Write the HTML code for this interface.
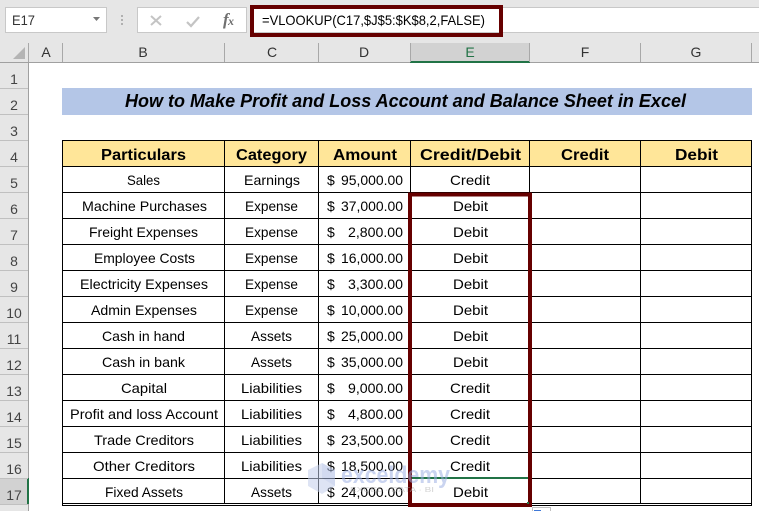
<!DOCTYPE html>
<html>
<head>
<meta charset="utf-8">
<title>Excel</title>
<style>
html,body{margin:0;padding:0;background:#fff;width:759px;height:511px;overflow:hidden}
svg{display:block}
text{font-family:"Liberation Sans",sans-serif;font-size:14px;fill:#000}
.c{text-anchor:middle}
.r{text-anchor:end}
.h{font-size:16px;font-weight:bold;text-anchor:middle}
.n{font-size:14px;fill:#444;text-anchor:middle}
.k{font-size:14px;fill:#333;text-anchor:middle}
</style>
</head>
<body>
<svg width="759" height="511" viewBox="0 0 759 511" xmlns="http://www.w3.org/2000/svg">
<!-- chrome -->
<rect x="0" y="0" width="759" height="62" fill="#e6e6e6"/>
<rect x="0" y="62" width="29" height="449" fill="#e6e6e6"/>
<rect x="5.5" y="7.500" width="101" height="25" fill="#fff" stroke="#c8c8c8"/>
<text x="12" y="25" textLength="23" lengthAdjust="spacingAndGlyphs" style="fill:#333">E17</text>
<polygon points="93,17 100,17 96.500,21" fill="#777"/>
<rect x="121" y="15" width="2" height="2" fill="#b0b0b0"/><rect x="121" y="19" width="2" height="2" fill="#b0b0b0"/><rect x="121" y="23" width="2" height="2" fill="#b0b0b0"/>
<rect x="137.500" y="7.500" width="109" height="25" fill="#fff" stroke="#c8c8c8"/>
<path d="M151 16 L161 25 M161 16 L151 25" stroke="#c4c4c4" stroke-width="2" fill="none"/>
<path d="M187 22 L191 26 L199 17" stroke="#c4c4c4" stroke-width="2.200" fill="none"/>
<text x="223" y="25" style="font-family:'Liberation Serif',serif;font-style:italic;font-size:17px;fill:#707070;font-weight:bold">f</text>
<text x="228" y="25" style="font-family:'Liberation Serif',serif;font-style:italic;font-size:12px;fill:#707070;font-weight:bold">x</text>
<rect x="253" y="7" width="506" height="26" fill="#fff"/>
<rect x="253" y="7" width="506" height="1" fill="#c8c8c8"/>
<rect x="253" y="32" width="506" height="1" fill="#c8c8c8"/>
<text x="262" y="25" textLength="223" lengthAdjust="spacingAndGlyphs">=VLOOKUP(C17,$J$5:$K$8,2,FALSE)</text>
<rect x="252" y="7" width="249" height="28" fill="none" stroke="#660000" stroke-width="4"/>

<!-- column headers -->
<polygon points="25,47 25,59 13,59" fill="#b4b4b4"/>
<rect x="410" y="43" width="120" height="19" fill="#d2d2d2"/>
<rect x="0" y="62" width="759" height="1" fill="#a0a0a0"/>
<rect x="410" y="61" width="120" height="2" fill="#217346"/>
<g fill="#a8a8a8">
<rect x="28" y="43" width="1" height="19"/><rect x="62" y="43" width="1" height="19"/><rect x="224" y="43" width="1" height="19"/><rect x="318" y="43" width="1" height="19"/><rect x="410" y="43" width="1" height="19"/><rect x="529" y="43" width="1" height="19"/><rect x="640" y="43" width="1" height="19"/><rect x="751" y="43" width="1" height="19"/>
</g>
<text class="k" x="46" y="57">A</text>
<text class="k" x="143" y="57">B</text>
<text class="k" x="272" y="57">C</text>
<text class="k" x="364" y="57">D</text>
<text class="k" x="470" y="57" style="fill:#217346">E</text>
<text class="k" x="585" y="57">F</text>
<text class="k" x="696" y="57">G</text>

<!-- row headers -->
<rect x="0" y="478" width="29" height="26" fill="#d2d2d2"/>
<rect x="28" y="62" width="1" height="449" fill="#a0a0a0"/>
<rect x="27" y="478" width="2" height="26" fill="#217346"/>
<g fill="#c0c0c0">
<rect x="0" y="88" width="28" height="1"/><rect x="0" y="114" width="28" height="1"/><rect x="0" y="140" width="28" height="1"/><rect x="0" y="166" width="28" height="1"/><rect x="0" y="192" width="28" height="1"/><rect x="0" y="218" width="28" height="1"/><rect x="0" y="244" width="28" height="1"/><rect x="0" y="270" width="28" height="1"/><rect x="0" y="296" width="28" height="1"/><rect x="0" y="322" width="28" height="1"/><rect x="0" y="348" width="28" height="1"/><rect x="0" y="374" width="28" height="1"/><rect x="0" y="400" width="28" height="1"/><rect x="0" y="426" width="28" height="1"/><rect x="0" y="452" width="28" height="1"/><rect x="0" y="478" width="28" height="1"/><rect x="0" y="504" width="28" height="1"/>
</g>
<text class="n" x="14" y="84">1</text>
<text class="n" x="14" y="110">2</text>
<text class="n" x="14" y="136">3</text>
<text class="n" x="14" y="162">4</text>
<text class="n" x="14" y="188">5</text>
<text class="n" x="14" y="214">6</text>
<text class="n" x="14" y="240">7</text>
<text class="n" x="14" y="266">8</text>
<text class="n" x="14" y="292">9</text>
<text class="n" x="14" y="318">10</text>
<text class="n" x="14" y="344">11</text>
<text class="n" x="14" y="370">12</text>
<text class="n" x="14" y="396">13</text>
<text class="n" x="14" y="422">14</text>
<text class="n" x="14" y="448">15</text>
<text class="n" x="14" y="474">16</text>
<text class="n" x="14" y="500">17</text>

<!-- title -->
<rect x="62" y="88" width="690" height="27" fill="#b4c6e7"/>
<text x="125" y="107" textLength="561" lengthAdjust="spacingAndGlyphs" style="font-size:18px;font-weight:bold;font-style:italic">How to Make Profit and Loss Account and Balance Sheet in Excel</text>

<!-- table -->
<rect x="62" y="140" width="690" height="26" fill="#ffe699"/>
<g stroke="#000" stroke-width="1" fill="none">
<path d="M62 140.500H752M62 166.500H752M62 192.500H752M62 218.500H752M62 244.500H752M62 270.500H752M62 296.500H752M62 322.500H752M62 348.500H752M62 374.500H752M62 400.500H752M62 426.500H752M62 452.500H752M62 478.500H752M62 503.500H752M62 505.500H752"/>
<path d="M62.500 140V506M224.500 140V504M318.500 140V504M410.500 140V504M529.500 140V504M640.500 140V504M751.500 140V506"/>
</g>
<text class="h" x="143.500" y="160" textLength="85" lengthAdjust="spacingAndGlyphs">Particulars</text>
<text class="h" x="271.500" y="160" textLength="71" lengthAdjust="spacingAndGlyphs">Category</text>
<text class="h" x="365" y="160" textLength="64" lengthAdjust="spacingAndGlyphs">Amount</text>
<text class="h" x="470.500" y="160" textLength="101" lengthAdjust="spacingAndGlyphs">Credit/Debit</text>
<text class="h" x="585" y="160" textLength="48" lengthAdjust="spacingAndGlyphs">Credit</text>
<text class="h" x="696.500" y="160" textLength="43" lengthAdjust="spacingAndGlyphs">Debit</text>

<text class="c" x="143.500" y="185" textLength="33" lengthAdjust="spacingAndGlyphs">Sales</text>
<text class="c" x="144.500" y="211" textLength="125" lengthAdjust="spacingAndGlyphs">Machine Purchases</text>
<text class="c" x="143.500" y="237" textLength="109" lengthAdjust="spacingAndGlyphs">Freight Expenses</text>
<text class="c" x="144.500" y="263" textLength="101" lengthAdjust="spacingAndGlyphs">Employee Costs</text>
<text class="c" x="144" y="289" textLength="128" lengthAdjust="spacingAndGlyphs">Electricity Expenses</text>
<text class="c" x="144" y="315" textLength="106" lengthAdjust="spacingAndGlyphs">Admin Expenses</text>
<text class="c" x="143.500" y="341" textLength="83" lengthAdjust="spacingAndGlyphs">Cash in hand</text>
<text class="c" x="143.500" y="367" textLength="83" lengthAdjust="spacingAndGlyphs">Cash in bank</text>
<text class="c" x="144" y="393" textLength="46" lengthAdjust="spacingAndGlyphs">Capital</text>
<text class="c" x="144" y="419" textLength="148" lengthAdjust="spacingAndGlyphs">Profit and loss Account</text>
<text class="c" x="144" y="445" textLength="100" lengthAdjust="spacingAndGlyphs">Trade Creditors</text>
<text class="c" x="144" y="471" textLength="102" lengthAdjust="spacingAndGlyphs">Other Creditors</text>
<text class="c" x="144" y="497" textLength="78" lengthAdjust="spacingAndGlyphs">Fixed Assets</text>

<text class="c" x="272" y="185" textLength="56" lengthAdjust="spacingAndGlyphs">Earnings</text>
<text class="c" x="271.500" y="211" textLength="53" lengthAdjust="spacingAndGlyphs">Expense</text>
<text class="c" x="271.500" y="237" textLength="53" lengthAdjust="spacingAndGlyphs">Expense</text>
<text class="c" x="271.500" y="263" textLength="53" lengthAdjust="spacingAndGlyphs">Expense</text>
<text class="c" x="271.500" y="289" textLength="53" lengthAdjust="spacingAndGlyphs">Expense</text>
<text class="c" x="271.500" y="315" textLength="53" lengthAdjust="spacingAndGlyphs">Expense</text>
<text class="c" x="271.500" y="341" textLength="41" lengthAdjust="spacingAndGlyphs">Assets</text>
<text class="c" x="271.500" y="367" textLength="41" lengthAdjust="spacingAndGlyphs">Assets</text>
<text class="c" x="271.500" y="393" textLength="61" lengthAdjust="spacingAndGlyphs">Liabilities</text>
<text class="c" x="271.500" y="419" textLength="61" lengthAdjust="spacingAndGlyphs">Liabilities</text>
<text class="c" x="271.500" y="445" textLength="61" lengthAdjust="spacingAndGlyphs">Liabilities</text>
<text class="c" x="271.500" y="471" textLength="61" lengthAdjust="spacingAndGlyphs">Liabilities</text>
<text class="c" x="271.500" y="497" textLength="41" lengthAdjust="spacingAndGlyphs">Assets</text>

<g>
<text x="327" y="185">$</text><text x="341" y="185" textLength="62" lengthAdjust="spacingAndGlyphs">95,000.00</text>
<text x="327" y="211">$</text><text x="341" y="211" textLength="62" lengthAdjust="spacingAndGlyphs">37,000.00</text>
<text x="327" y="237">$</text><text x="348" y="237" textLength="55" lengthAdjust="spacingAndGlyphs">2,800.00</text>
<text x="327" y="263">$</text><text x="341" y="263" textLength="62" lengthAdjust="spacingAndGlyphs">16,000.00</text>
<text x="327" y="289">$</text><text x="348" y="289" textLength="55" lengthAdjust="spacingAndGlyphs">3,300.00</text>
<text x="327" y="315">$</text><text x="341" y="315" textLength="62" lengthAdjust="spacingAndGlyphs">10,000.00</text>
<text x="327" y="341">$</text><text x="341" y="341" textLength="62" lengthAdjust="spacingAndGlyphs">25,000.00</text>
<text x="327" y="367">$</text><text x="341" y="367" textLength="62" lengthAdjust="spacingAndGlyphs">35,000.00</text>
<text x="327" y="393">$</text><text x="348" y="393" textLength="55" lengthAdjust="spacingAndGlyphs">9,000.00</text>
<text x="327" y="419">$</text><text x="348" y="419" textLength="55" lengthAdjust="spacingAndGlyphs">4,800.00</text>
<text x="327" y="445">$</text><text x="341" y="445" textLength="62" lengthAdjust="spacingAndGlyphs">23,500.00</text>
<text x="327" y="471">$</text><text x="341" y="471" textLength="62" lengthAdjust="spacingAndGlyphs">18,500.00</text>
<text x="327" y="497">$</text><text x="341" y="497" textLength="62" lengthAdjust="spacingAndGlyphs">24,000.00</text>
</g>

<text class="c" x="470" y="185" textLength="40" lengthAdjust="spacingAndGlyphs">Credit</text>
<text class="c" x="470.500" y="211" textLength="35" lengthAdjust="spacingAndGlyphs">Debit</text>
<text class="c" x="470.500" y="237" textLength="35" lengthAdjust="spacingAndGlyphs">Debit</text>
<text class="c" x="470.500" y="263" textLength="35" lengthAdjust="spacingAndGlyphs">Debit</text>
<text class="c" x="470.500" y="289" textLength="35" lengthAdjust="spacingAndGlyphs">Debit</text>
<text class="c" x="470.500" y="315" textLength="35" lengthAdjust="spacingAndGlyphs">Debit</text>
<text class="c" x="470.500" y="341" textLength="35" lengthAdjust="spacingAndGlyphs">Debit</text>
<text class="c" x="470.500" y="367" textLength="35" lengthAdjust="spacingAndGlyphs">Debit</text>
<text class="c" x="470" y="393" textLength="40" lengthAdjust="spacingAndGlyphs">Credit</text>
<text class="c" x="470" y="419" textLength="40" lengthAdjust="spacingAndGlyphs">Credit</text>
<text class="c" x="470" y="445" textLength="40" lengthAdjust="spacingAndGlyphs">Credit</text>
<text class="c" x="470" y="471" textLength="40" lengthAdjust="spacingAndGlyphs">Credit</text>
<text class="c" x="470.500" y="497" textLength="35" lengthAdjust="spacingAndGlyphs">Debit</text>

<!-- selection -->
<rect x="412" y="477" width="116" height="2" fill="#217346"/>
<rect x="410" y="194.500" width="120" height="310.500" fill="none" stroke="#660000" stroke-width="4"/>
<rect x="527" y="502" width="2" height="2" fill="#217346"/>

<!-- quick analysis -->
<rect x="532.500" y="507.500" width="18" height="8" fill="#fff" stroke="#c0c0c0"/>
<rect x="534" y="510" width="7" height="4" fill="#3f78d8"/>

<!-- watermark -->
<g opacity="0.55">
<polygon points="322,463 335,470 335,486 322,494 308,486 308,470" fill="#c4cfec"/>
<polygon points="322,463 335,470 335,486 322,478" fill="#aebde4"/>
<text x="341" y="483" textLength="109" lengthAdjust="spacingAndGlyphs" style="font-size:24px;font-weight:bold;fill:#9fb2e4">exceldemy</text>
<text x="350" y="492" textLength="84" lengthAdjust="spacingAndGlyphs" style="font-size:7.500px;fill:#b0b0b0">EXCEL · DATA · BI</text>
</g>
</svg>
</body>
</html>
